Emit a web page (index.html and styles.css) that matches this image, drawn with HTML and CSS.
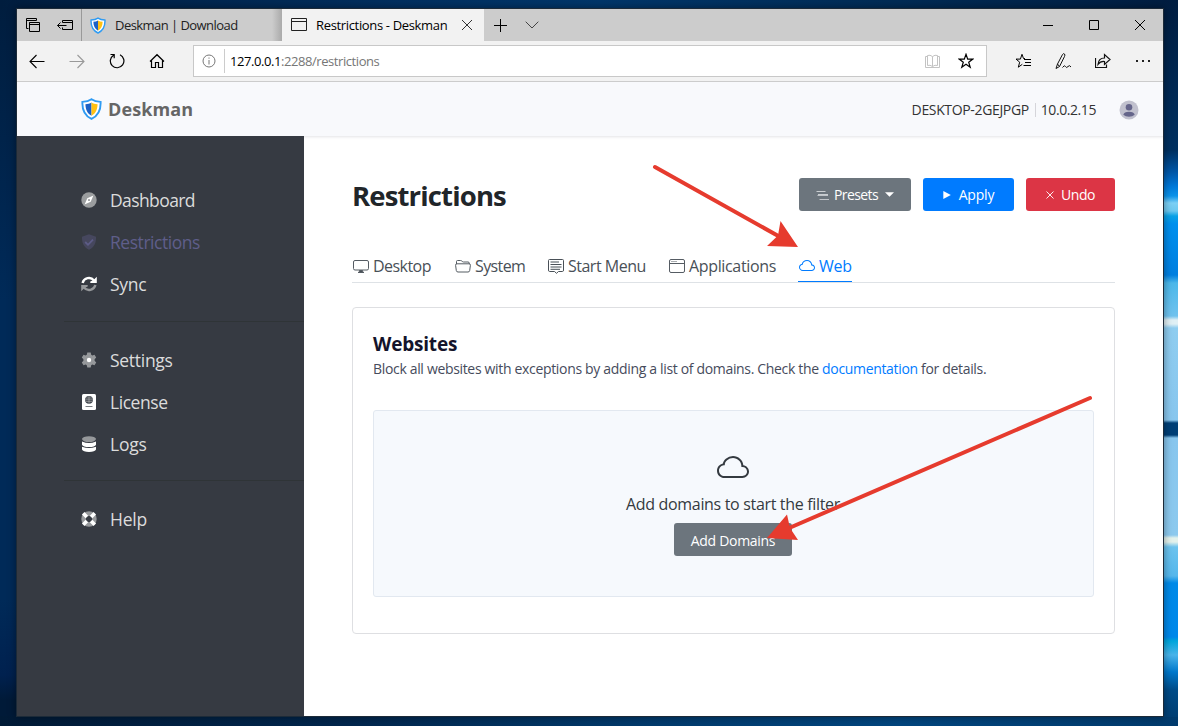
FILE: index.html
```html
<!DOCTYPE html>
<html lang="en">
<head>
<meta charset="utf-8">
<title>Restrictions - Deskman</title>
<link rel="stylesheet" href="styles.css">
</head>
<body>
<svg class="defs" width="0" height="0" aria-hidden="true">
  <symbol id="shield" viewBox="0 0 20 21">
    <path d="M10 1.2C7.5 2.9 4.600 3.500 1.300 3.700C1 10.800 3.600 16.900 10 19.900C16.400 16.900 19 10.800 18.700 3.700C15.400 3.500 12.500 2.900 10 1.200Z" fill="#fff" stroke="#2f9bf2" stroke-width="1.800"/>
    <path d="M10 4.200C8.400 5.200 6.500 5.700 4.200 5.900C4.300 10.600 5.900 14.600 10 17Z" fill="#1c61c5"/>
    <path d="M10 4.200C11.600 5.200 13.500 5.700 15.800 5.900C15.700 10.600 14.100 14.600 10 17Z" fill="#ffc114"/>
  </symbol>
  <symbol id="cloud" viewBox="0 0 16 16">
    <path fill="currentColor" d="M4.406 3.342A5.53 5.53 0 0 1 8 2c2.690 0 4.923 2 5.166 4.579C14.758 6.804 16 8.137 16 9.773 16 11.569 14.502 13 12.687 13H3.781C1.708 13 0 11.366 0 9.318c0-1.763 1.266-3.223 2.942-3.593.143-.863.698-1.723 1.464-2.383zm.653.757c-.757.653-1.153 1.440-1.153 2.056v.448l-.445.049C2.064 6.805 1 7.952 1 9.318 1 10.785 2.230 12 3.781 12h8.906C13.980 12 15 10.988 15 9.773c0-1.216-1.020-2.228-2.313-2.228h-.5v-.5C12.188 4.825 10.328 3 8 3a4.530 4.530 0 0 0-2.941 1.100z"/>
  </symbol>
</svg>
<div class="window">
  <div class="tabstrip">
    <div class="tab-tools">
      <svg width="16" height="16" viewBox="0 0 16 16" fill="none" stroke="#000"><path d="M3.500 11.500H1.500V1.500H11.500V3.500M1.500 3.500H11.500M4.500 11.500V5.500M4.500 5.500H14.500V14.500H4.500ZM4.500 7.500H14.500"/></svg>
      <svg width="16" height="16" viewBox="0 0 16 16" fill="none" stroke="#000"><path d="M5.500 5.500V3.500H15.500V12.500H5.500V10.500M5.500 5.500H15.500M9.500 8.500H.5M3.500 5.500L.5 8.500L3.500 11.500"/></svg>
    </div>
    <div class="tab tab-idle"><svg width="16" height="17"><use href="#shield"/></svg><span>Deskman | Download</span></div>
    <div class="tab tab-active">
      <svg width="17" height="14" viewBox="0 0 17 14" fill="none" stroke="#222"><path d="M.5 .5H15.500V12.500H.5ZM.5 3.500H15.500"/></svg>
      <span>Restrictions - Deskman</span>
      <svg class="tab-close" width="10" height="10" viewBox="0 0 10 10" stroke="#333"><path d="M0 0L10 10M10 0L0 10"/></svg>
    </div>
    <svg class="tab-plus" width="13" height="13" viewBox="0 0 13 13" stroke="#000"><path d="M6.500 0V13M0 6.500H13"/></svg>
    <svg class="tab-chev" width="14" height="8" viewBox="0 0 14 8" fill="none" stroke="#444"><path d="M.7 .7L7 7L13.300 .7"/></svg>
    <div class="captions">
      <svg width="10" height="10" viewBox="0 0 10 10" stroke="#000"><path d="M0 5.500H10"/></svg>
      <svg width="10" height="10" viewBox="0 0 10 10" fill="none" stroke="#000"><path d="M.5 .5H9.500V9.500H.5Z"/></svg>
      <svg width="10" height="10" viewBox="0 0 10 10" stroke="#000"><path d="M0 0L10 10M10 0L0 10"/></svg>
    </div>
  </div>
  <div class="toolbar">
    <div class="nav-buttons">
      <svg width="16" height="16" viewBox="0 0 16 16" fill="none" stroke="#000" stroke-width="1.100"><path d="M15.500 8.500H1M7.500 2L1 8.500L7.500 15"/></svg>
      <svg width="16" height="16" viewBox="0 0 16 16" fill="none" stroke="#999" stroke-width="1.100"><path d="M.5 8.500H15M8.500 2L15 8.500L8.500 15"/></svg>
      <svg width="16" height="16" viewBox="0 0 16 16" fill="none" stroke="#000" stroke-width="1.200"><path d="M11 1.800A6.800 6.800 0 1 1 4.500 2.200M1.500 1.500H5.200V5.200"/></svg>
      <svg width="16" height="16" viewBox="0 0 16 16" fill="none" stroke="#000" stroke-width="1.200"><path d="M1 8.500L8 1.700L15 8.500M2.500 7.500V14.500H6.500V9.500H9.500V14.500H13.500V7.500"/></svg>
    </div>
    <div class="address">
      <svg class="info" width="14" height="14" viewBox="0 0 14 14" fill="none" stroke="#777"><circle cx="7" cy="7" r="6"/><path d="M7 6V10.500M7 3.500V4.700"/></svg>
      <span class="address-text"><b>127.0.0.1</b>:2288/restrictions</span>
      <svg class="book" width="16" height="15" viewBox="0 0 16 15" fill="none" stroke="#c3c3c3"><path d="M7.500 2.500V12.500M7.500 2.500Q5 .5 2.500 1.500V11.500Q5 10.500 7.500 12.500Q10 10.500 12.500 11.500V1.500Q10 .5 7.500 2.500M2.500 2.500H.5V13.500H14.500V2.500H12.500"/></svg>
      <svg width="16" height="16" viewBox="0 0 16 16" fill="none" stroke="#000" stroke-width="1.200"><path d="M8 1.300L9.700 6.100H14.800L10.700 9.200L12.200 14.200L8 11.200L3.800 14.200L5.300 9.200L1.200 6.100H6.300Z"/></svg>
    </div>
    <div class="actions">
      <svg width="17" height="16" viewBox="0 0 17 16" fill="none" stroke="#000"><path d="M10 5.500L8.500 5.500L7 1.300L5.400 6.100H1L4.700 9.200L3.300 14.200L7.300 11.300M9 6.500H16M10 9.500H16M8.500 12.500H16"/></svg>
      <svg width="17" height="16" viewBox="0 0 17 16" fill="none" stroke="#111"><path d="M1 15.500L2.500 11L7.500 1.500Q8.500 0 9.500 1Q10.300 2 9.500 3.500L4.500 13.500L1 15.500M2.500 11L4.500 13.500M7.500 14.500Q9.500 11.500 10.500 13.500T13 13.500T16 14"/></svg>
      <svg width="17" height="16" viewBox="0 0 17 16" fill="none" stroke="#111" stroke-width="1.200"><path d="M.5 5V14.500H11.500V11.500M3 11.500Q3.500 5 9.500 5V1.500L15 6.500L9.500 11.500V8.500Q5.500 8 3 11.500Z"/></svg>
      <svg width="17" height="16" viewBox="0 0 17 16" fill="#222"><path d="M1 7H3V9H1ZM7 7H9V9H7ZM13 7H15V9H13Z"/></svg>
    </div>
  </div>
  <header class="site-header">
    <a class="brand"><svg width="21" height="22"><use href="#shield"/></svg><span>Deskman</span></a>
    <div class="host"><span class="host-name">DESKTOP-2GEJPGP</span><i></i><span class="host-ip">10.0.2.15</span></div>
    <svg class="avatar" width="20" height="20" viewBox="0 0 20 20"><circle cx="10" cy="10" r="9.500" fill="#c1c1ce"/><circle cx="10" cy="7.300" r="3.300" fill="#65658a"/><path d="M4.300 14.800Q5 11.800 10 11.800T15.700 14.800Q13.500 16.700 10 16.700T4.300 14.800Z" fill="#65658a"/></svg>
  </header>
  <div class="page">
    <nav class="sidebar">
      <a><svg viewBox="0 0 16 16"><circle cx="8" cy="8" r="7.700" fill="#9b9d9f"/><path fill="#fff" fill-rule="evenodd" d="M12.400 3.600L9.700 9.700L3.600 12.400L6.300 6.300ZM8 6.900a1.100 1.100 0 1 0 .01 0Z"/></svg><span class="w-dash">Dashboard</span></a>
      <a class="current"><svg viewBox="0 0 16 16"><path fill="#46475e" d="M8 .3L15 2.800C15.300 8.500 13.400 13.300 8 15.700C2.600 13.300 .7 8.500 1 2.800Z"/><path d="M4.200 8L7 10.800L12 5.600" fill="none" stroke="#5d5c87" stroke-width="1.800"/></svg><span class="w-rest">Restrictions</span></a>
      <a><svg viewBox="0 0 16 16" fill="none"><path d="M1.600 7A6.500 6.500 0 0 1 13 4.500" stroke="#fff" stroke-width="2.400"/><path fill="#fff" d="M15.800 .8V7H9.300V5.500L12.500 4Z"/><path d="M14.400 9A6.500 6.500 0 0 1 3 11.500" stroke="#96989b" stroke-width="2.400"/><path fill="#96989b" d="M.2 15.200V9H6.700V10.500L3.500 12Z"/></svg><span class="w-sync">Sync</span></a>
      <hr>
      <a><svg viewBox="0 0 16 16"><path fill="#96989b" d="M6.300 .5H9.700L10.200 2.700L11.300 3.400L13.500 2.700L15.200 5.600L13.600 7.200V8.800L15.200 10.400L13.500 13.300L11.300 12.600L10.200 13.300L9.700 15.500H6.300L5.800 13.300L4.700 12.600L2.500 13.300L.8 10.400L2.400 8.800V7.200L.8 5.600L2.500 2.700L4.700 3.400L5.800 2.700Z"/><circle cx="8" cy="8" r="2.200" fill="#fff"/></svg><span class="w-set">Settings</span></a>
      <a><svg viewBox="0 0 16 16"><rect x="1" y="0" width="14" height="16" rx="1.500" fill="#fff"/><circle cx="8" cy="5.800" r="3.900" fill="#3b4048"/><path d="M4.200 5.800H11.800M4.900 4H11.100M4.900 7.600H11.100M8 2V9.700" stroke="#bbb" stroke-width=".6"/><path d="M4.500 12.500H11.500" stroke="#777b80"/></svg><span class="w-lic">License</span></a>
      <a><svg viewBox="0 0 16 16"><ellipse cx="8" cy="3.100" rx="7" ry="2.900" fill="#96989b"/><path fill="#fff" d="M1 5.500Q8 8.500 15 5.500V8.700Q14 11 8 11T1 8.700ZM1 10.700Q8 13.500 15 10.700V13.600Q14 16 8 16T1 13.600Z"/></svg><span class="w-logs">Logs</span></a>
      <hr>
      <a><svg viewBox="0 0 16 16" fill="none"><circle cx="8" cy="8" r="5.400" stroke="#96989b" stroke-width="4.600"/><g stroke="#fff" stroke-width="3.600"><path d="M2.200 2.200L5.900 5.900M13.800 2.200L10.100 5.900M2.200 13.800L5.900 10.100M13.800 13.800L10.100 10.100"/></g></svg><span class="w-help">Help</span></a>
    </nav>
    <main class="content">
      <div class="title-row">
        <h1>Restrictions</h1>
        <div class="buttons">
          <button class="btn presets"><svg width="14" height="14" viewBox="0 0 14 14" stroke="#c9cdd1"><path d="M.5 3.500H9.500M2 6.500H12" /><path d="M1.500 7.500H12M3.500 11.500H13" stroke-width=".9"/></svg><span>Presets</span><svg class="caret" width="9" height="5" viewBox="0 0 9 5"><path d="M0 .2H9L4.500 4.800Z" fill="#fff"/></svg></button>
          <button class="btn apply"><svg width="8" height="8" viewBox="0 0 8 8"><path d="M.3 0L7.800 4L.3 8Z" fill="#fff"/></svg><span>Apply</span></button>
          <button class="btn undo"><svg width="8" height="8" viewBox="0 0 8 8" stroke="#fff" stroke-width=".9"><path d="M.5 .5L7.500 7.500M7.500 .5L.5 7.500"/></svg><span>Undo</span></button>
        </div>
      </div>
      <div class="tabs">
        <a class="t-desktop"><svg viewBox="0 0 16 16" fill="none" stroke="#555c63"><path d="M2 2.500H14Q15.500 2.500 15.500 4V10.500Q15.500 12 14 12H2Q.5 12 .5 10.500V4Q.5 2.500 2 2.500Z"/><path d="M6.500 12.500H9.500L10 14.500H6ZM5 14.500H11" fill="#495057"/></svg><span>Desktop</span></a>
        <a class="t-system"><svg viewBox="0 0 16 16" fill="none" stroke="#555c63"><path d="M1.500 6V3.500Q1.500 2.500 2.500 2.500H5.500Q6.300 2.500 7 3.200T8.500 4H13Q14.300 4 14.300 5.200V6M2 5.800H14Q15.600 5.800 15.400 7.300L14.700 12.500Q14.500 14 13 14H3Q1.500 14 1.300 12.500L.6 7.300Q.4 5.800 2 5.800Z"/></svg><span>System</span></a>
        <a class="t-start"><svg viewBox="0 0 16 16" fill="none" stroke="#495057"><path d="M1.500 1.500H14.500Q15.500 1.500 15.500 2.500V12Q15.500 13.500 14.500 13.500H10.500L8.500 15.300L6.500 13.500H1.500Q.5 13.500 .5 12V2.500Q.5 1.500 1.500 1.500ZM2.500 4H11M2.500 6.500H13.500M2.500 9H13.500M2.500 11.300H12"/></svg><span>Start Menu</span></a>
        <a class="t-apps"><svg viewBox="0 0 16 16" fill="none" stroke="#555c63"><path d="M2 1.500H14Q15.500 1.500 15.500 3V13Q15.500 14.500 14 14.500H2Q.5 14.500 .5 13V3Q.5 1.500 2 1.500ZM.5 5.500H15.500M2.500 3.500H3.500M4.500 3.500H5.500M6.500 3.500H7.500"/></svg><span>Applications</span></a>
        <a class="t-web"><svg><use href="#cloud"/></svg><span>Web</span></a>
      </div>
      <section class="card">
        <h2>Websites</h2>
        <p class="desc">Block all websites with exceptions by adding a list of domains. Check the <a>documentation</a> for details.</p>
        <div class="empty">
          <svg width="32" height="32"><use href="#cloud"/></svg>
          <p>Add domains to start the filter</p>
          <button class="btn add"><span>Add Domains</span></button>
        </div>
      </section>
    </main>
  </div>
</div>
<svg class="arrows" width="1178" height="726" viewBox="0 0 1178 726" fill="#e63b2e" stroke="#e63b2e" stroke-linecap="round">
  <path d="M655 167L781 237.500" stroke-width="4"/><path d="M798 247L780.500 221L778 235.500L767 246Z" stroke="none"/>
  <path d="M1090 398L788 528.500" stroke-width="4"/><path d="M767 538L787 514.500L790 528L798 540Z" stroke="none"/>
</svg>
</body>
</html>
```
FILE: styles.css
```css
* { box-sizing: border-box; }
body {
  margin: 0; width: 1178px; height: 726px; overflow: hidden; position: relative;
  padding: 8px 14px 9px 16px;
  font-family: "Open Sans", "Noto Sans", sans-serif;
  background:
    linear-gradient(180deg, #001d40 0, #003060 150px, #0057a8 172px, #0078d8 186px, #0b93ea 196px, #7cd0f5 203px, #6cc8f0 211px, #0aa2e6 216px, #0090ee 224px, #007fe0 275px, #4cb8ea 283px, #6fc2ee 316px, #e0f0f5 320px, #e0f0f5 324px, #8fcdf0 328px, #88c6ee 420px, #003f76 423px, #003f76 435px, #88c6ee 438px, #8cc9ee 535px, #e3f2ec 538px, #e3f2ec 542px, #6cc3ee 547px, #55b7ec 576px, #008ae8 583px, #0088ea 637px, #00a6dc 641px, #49b4ea 655px, #0078cc 672px, #004c88 690px, #003a6c 726px) right 0 top 0 / 15px 717px no-repeat,
    linear-gradient(90deg, #001a36, #00264d 350px, #003a6c 650px, #00457e 900px, #003a6c) 0 100% / 100% 10px no-repeat,
    linear-gradient(90deg, #001d3e, #002f60 400px, #00366a 600px, #002b55 900px, #001d40) 0 0 / 100% 9px no-repeat,
    linear-gradient(180deg, #001d3e, #002a58 300px, #002a58 600px, #00214f 675px, #001a38 700px);
}
.defs { position: absolute; }
svg { flex: none; display: block; }
.window { height: 709px; border: 1px solid #1c2a38; box-shadow: 0 0 8px rgba(0,0,0,.4); display: flex; flex-direction: column; background: #fff; }
.tabstrip { height: 32px; background: #ccc; display: flex; align-items: center; flex: none; font-size: 13px; color: #222; white-space: nowrap; }
.tab-tools { width: 65px; height: 32px; padding-left: 8px; display: flex; gap: 16px; align-items: center; border-right: 1px solid #999; }
.tab { height: 32px; display: flex; align-items: center; }
.tab span { padding-bottom: 1px; }
.tab-idle { width: 200px; padding-left: 8px; gap: 9px; letter-spacing: -.55px; background: linear-gradient(90deg, transparent 190px, #aaa); }
.tab-active { width: 202px; padding-left: 9px; gap: 8px; letter-spacing: -.34px; background: #f2f2f2; color: #000; }
.tab-close { margin-left: auto; margin-right: 12px; }
.tab-plus { margin-left: 10px; }
.tab-chev { margin-left: 18px; }
.captions { margin-left: auto; margin-right: 18px; display: flex; gap: 36px; }
.toolbar { height: 41px; flex: none; background: #f2f2f2; border-bottom: 1px solid #ccc; display: flex; align-items: center; }
.nav-buttons { display: flex; gap: 24px; padding-left: 12px; width: 176px; }
.address { width: 794px; height: 32px; background: #fff; border: 1px solid #c8c8c8; display: flex; align-items: center; padding: 0 12px 0 8px; }
.address-text { margin-left: 8px; padding-left: 5px; border-left: 1px solid #ccc; line-height: 24px; font-size: 13px; letter-spacing: -.43px; color: #767676; flex: 1; }
.address-text b { font-weight: 400; color: #000; }
.book { margin-right: 17px; }
.actions { display: flex; gap: 23px; margin-left: 28px; }
.site-header { height: 54px; flex: none; background: #f8f9fc; display: flex; align-items: center; padding: 1px 24px 0 64px; }
.brand { display: flex; align-items: center; gap: 6px; font-weight: 700; font-size: 18px; letter-spacing: .1px; color: #666; }
.brand svg { margin-bottom: 2px; }
.brand span { padding-bottom: 2px; }
.host { margin-left: auto; display: flex; align-items: center; font-size: 14px; color: #333; }
.host-name { letter-spacing: -.35px; }
.host-ip { letter-spacing: -.43px; }
.host i { width: 1px; height: 14px; background: #d5d5da; margin: 0 5px 0 6px; }
.avatar { margin-left: 23px; }
.page { flex: 1; display: flex; min-height: 0; }
.sidebar { width: 287px; background: #363a42; padding: 43px 0 0 64px; }
.sidebar a { height: 42.200px; display: flex; align-items: center; gap: 13px; font-size: 17.500px; color: #dcdcdc; }
.sidebar a svg { width: 16px; height: 16px; }
.sidebar a.current { color: #5f5e8a; }
.sidebar hr { margin: 15px 0 17px -17px; border: 0; border-top: 1px solid #2f3437; }
.w-dash { letter-spacing: -.6px; }
.w-rest { letter-spacing: -.45px; }
.w-set { letter-spacing: -.28px; }
.w-lic { letter-spacing: -.45px; }
.w-sync, .w-logs, .w-help { letter-spacing: -.25px; }
.content { flex: 1; padding: 0 48px; box-shadow: inset 0 3px 3px -2px #e3e3e6; }
.title-row { display: flex; justify-content: space-between; padding-top: 42px; height: 108px; }
h1 { margin: 0; font-size: 27.500px; letter-spacing: -.85px; line-height: 36px; color: #212529; }
.buttons { display: flex; gap: 12px; }
.btn { height: 33px; border: 0; border-radius: 3px; padding: 0; color: #fff; font: inherit; font-size: 14px; display: flex; align-items: center; justify-content: center; }
.presets { width: 112px; gap: 4px; background: #6c757d; }
.presets span { letter-spacing: -.6px; }
.presets .caret { margin-left: 3px; }
.apply { width: 91px; gap: 8px; background: #007bff; }
.apply span { letter-spacing: -.2px; }
.undo { width: 89px; gap: 7px; background: #dc3545; }
.undo span { letter-spacing: -.45px; }
.tabs { height: 39px; border-bottom: 1px solid #dee2e6; display: flex; font-size: 16px; color: #495057; }
.tabs a { display: flex; align-items: center; gap: 4px; height: 38px; padding: 5px 0 0 1px; white-space: nowrap; }
.tabs svg { width: 16px; height: 16px; }
.tabs .t-desktop { width: 102px; letter-spacing: -.55px; }
.tabs .t-system { width: 93px; letter-spacing: -.6px; }
.tabs .t-start { width: 121px; letter-spacing: -.5px; }
.tabs .t-apps { width: 130px; letter-spacing: -.35px; }
.tabs .t-web { width: 54px; letter-spacing: -.3px; color: #007bff; border-bottom: 1px solid #007bff; padding-top: 6px; }
.card { margin-top: 24px; height: 327px; border: 1px solid #dedfe2; border-radius: 4px; padding: 23px 20px 0; }
h2 { margin: 0; font-size: 19px; letter-spacing: -.2px; line-height: 26px; color: #14142b; }
.desc { margin: 1px 0 31px; font-size: 14px; letter-spacing: -.33px; line-height: 21px; color: #464b5c; white-space: nowrap; }
.desc a { color: #007bff; }
.empty { height: 187px; background: #f6f9fd; border: 1px solid #e2e8f0; border-radius: 3px; padding: 41px 1px 0 0; display: flex; flex-direction: column; align-items: center; color: #343a40; }
.empty p { margin: 9px 0 7px; font-size: 16px; letter-spacing: -.33px; line-height: 23px; white-space: nowrap; }
.add { width: 118px; background: #6c757d; padding-top: 2px; letter-spacing: -.3px; }
.arrows { position: absolute; left: 0; top: 0; }
```
